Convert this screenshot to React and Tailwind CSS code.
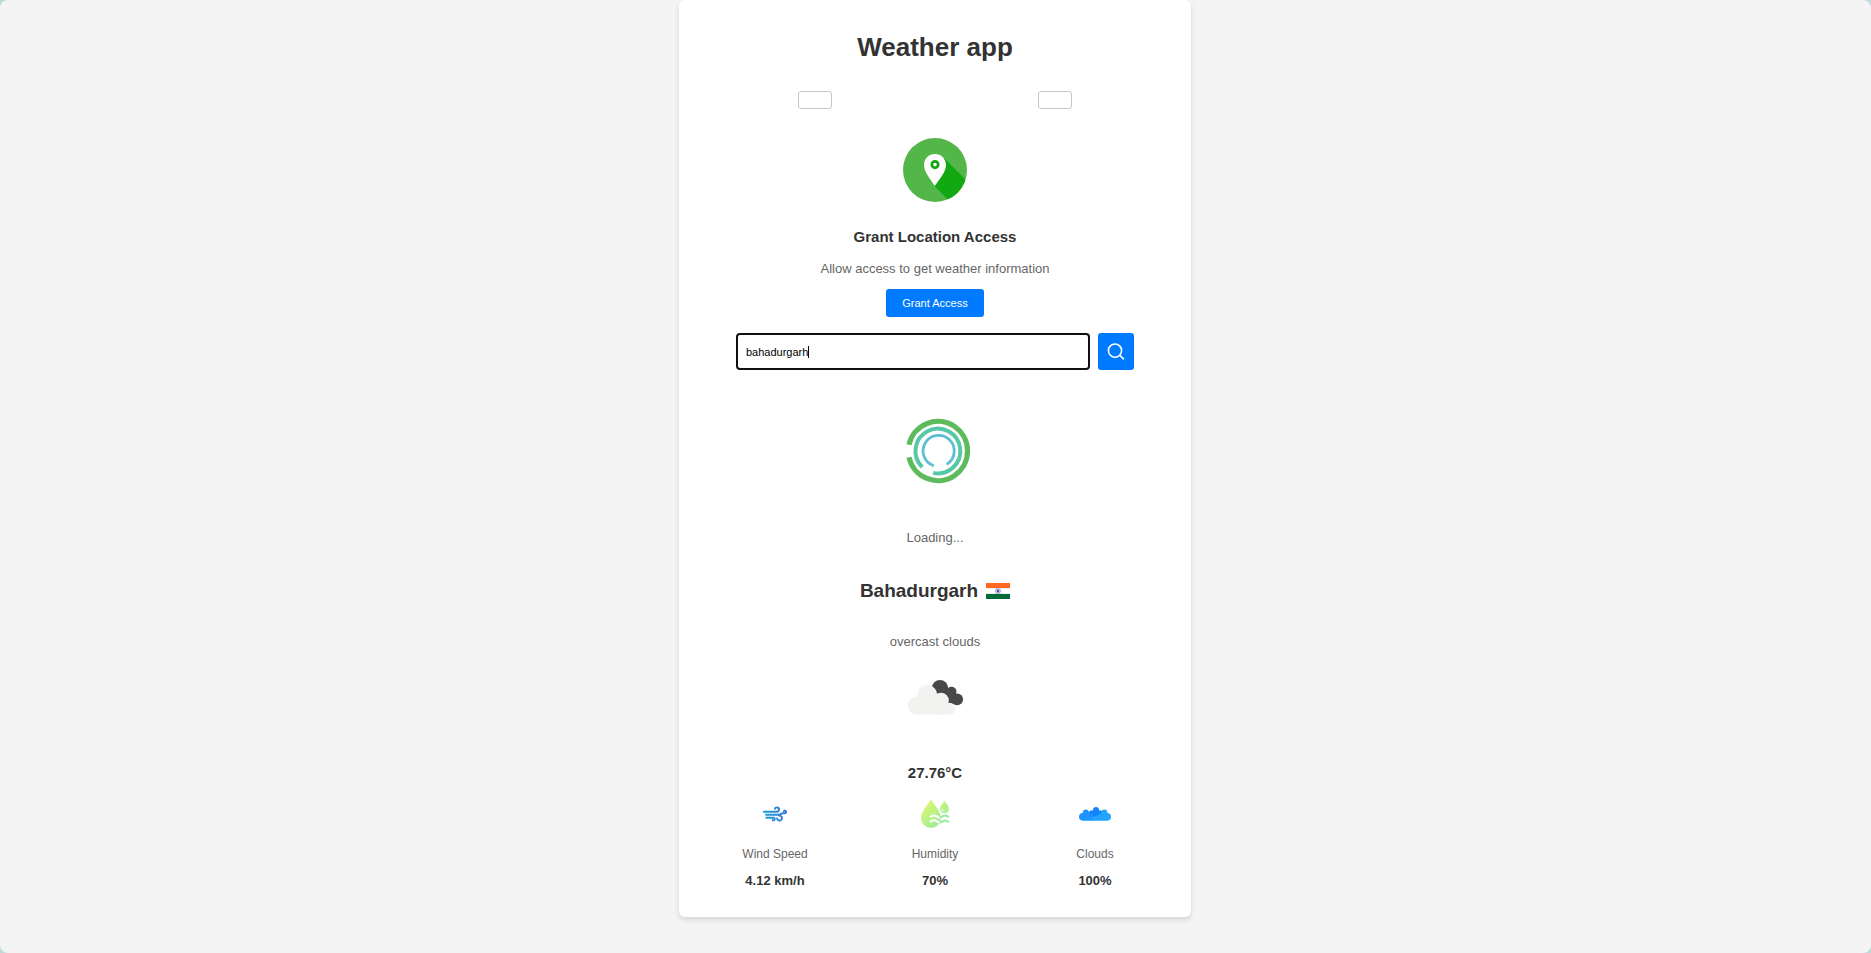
function PinIcon() {
  return (
    <svg viewBox="0 0 64 64" className="size-16" aria-hidden="true">
      <defs>
        <clipPath id="pin-disc">
          <circle cx="32" cy="32" r="32" />
        </clipPath>
      </defs>
      <circle cx="32" cy="32" r="32" fill="#52b748" />
      <path d="M41 20 L70 49 L60 77 L31.5 48 Z" fill="#12a812" clipPath="url(#pin-disc)" />
      <path d="M32 16 C25.7 16 21 20.8 21 27 C21 34 27.5 41 31.8 48 C36.5 41 43 34 43 27 C43 20.8 38.3 16 32 16 Z" fill="#fff" />
      <circle cx="32" cy="26.6" r="3.2" fill="#fff" stroke="#12a812" strokeWidth="2.8" />
    </svg>
  );
}

function SearchIcon() {
  return (
    <svg viewBox="0 0 16 16" className="size-4 overflow-visible" fill="none" stroke="#fff" strokeWidth="1.6" strokeLinecap="round" aria-hidden="true">
      <circle cx="7" cy="6.6" r="6.6" />
      <path d="M11.8 11.4 L15.5 14.8" />
    </svg>
  );
}

function Spinner() {
  return (
    <svg viewBox="0 0 80 80" className="size-20" fill="none" aria-hidden="true">
      <path d="M14 33.8 A29.6 29.6 0 1 1 14 46.2" stroke="#5dbb5d" strokeWidth="5.2" />
      <path d="M27.2 56 A22.4 22.4 0 1 1 38.2 61.9" stroke="#56c8a8" strokeWidth="4" />
      <path d="M38.8 54.8 A15.6 15.6 0 1 1 51.6 53.4" stroke="#5bc0d4" strokeWidth="2.8" />
    </svg>
  );
}

function IndiaFlag() {
  return (
    <svg viewBox="0 0 24 16" className="h-4 w-6" role="img" aria-label="India">
      <rect width="24" height="16" fill="#fff" />
      <rect width="24" height="5" fill="#ff6820" />
      <rect y="5" width="24" height="1" fill="#f3eeee" />
      <rect y="10" width="24" height="1" fill="#e3eee8" />
      <rect y="11" width="24" height="5" fill="#046a38" />
      <circle cx="12" cy="8" r="2.4" fill="#dcdaf2" stroke="#8580c6" strokeWidth="0.8" />
      <circle cx="12" cy="8" r="1.2" fill="#4a44a8" />
    </svg>
  );
}

function OvercastIcon() {
  return (
    <svg viewBox="0 0 80 80" className="size-20" aria-hidden="true">
      <g fill="#484849">
        <circle cx="45" cy="30" r="8" />
        <circle cx="56.5" cy="33.8" r="5" />
        <circle cx="62.2" cy="41.3" r="5.9" />
        <path d="M39 33 L48 25 L60 36 L62 47 L50 44 Z" />
      </g>
      <g fill="#f2f2f1">
        <circle cx="21.8" cy="47.6" r="8.9" />
        <circle cx="32.3" cy="37" r="10" />
        <circle cx="46" cy="42.5" r="7.8" />
        <circle cx="54.5" cy="50.6" r="5.9" />
        <rect x="21.5" y="38" width="26" height="18.5" />
        <rect x="42" y="46" width="12.5" height="10.5" />
      </g>
    </svg>
  );
}

function WindIcon() {
  return (
    <svg viewBox="0 0 32 32" className="size-8" fill="none" strokeWidth="1.9" strokeLinecap="round" aria-hidden="true">
      <defs>
        <linearGradient id="wind-tone" gradientUnits="userSpaceOnUse" x1="4" y1="0" x2="28" y2="0">
          <stop offset="0" stopColor="#1aa0dc" />
          <stop offset="1" stopColor="#3b74d6" />
        </linearGradient>
      </defs>
      <g stroke="url(#wind-tone)">
        <path d="M4.8 13.8 H17.6 A2.2 2.2 0 1 0 15.8 10.8" />
        <path d="M7 16.8 H18.5 C21.5 16.8 21.5 15.4 24 15.2 H25.5 A1.3 1.3 0 1 0 24.8 13.2" />
        <path d="M20 17.6 A2.5 2.5 0 1 1 18 20.4" />
        <path d="M7.3 19.8 H14.4 A1.3 1.3 0 1 1 13.6 22" />
      </g>
    </svg>
  );
}

function HumidityIcon() {
  return (
    <svg viewBox="0 0 32 32" className="size-8" aria-hidden="true">
      <defs>
        <linearGradient id="drop-tone" gradientUnits="userSpaceOnUse" x1="4" y1="4" x2="24" y2="28">
          <stop offset="0" stopColor="#e0f870" />
          <stop offset="1" stopColor="#98ea9c" />
        </linearGradient>
      </defs>
      <g fill="url(#drop-tone)">
        <path d="M12 1.8 C8.5 6.5 2 14 2 20 A10 10 0 0 0 22 20 C22 14 15.5 6.5 12 1.8 Z" />
        <path d="M25.5 3 C23.8 5.4 21 8 21 10.8 A4.5 4.5 0 0 0 30 10.8 C30 8 27.2 5.4 25.5 3 Z" />
      </g>
      <path d="M23 11 A2.4 2.4 0 0 0 25 13.2" fill="none" stroke="#fff" strokeWidth="1" strokeLinecap="round" />
      <g fill="none" stroke="#fff" strokeWidth="2">
        <path d="M11 19.2 C13.5 16.8 15.5 16.8 18 18.6 C20 20 21 20 22.5 19.4" />
        <path d="M11 24 C13.5 21.6 15.5 21.6 18 23.4 C20 24.8 21 24.8 22.5 24.2" />
      </g>
      <g fill="none" stroke="#98ea9c" strokeWidth="2">
        <path d="M20.5 19.6 C23 19.6 24 17.4 26.2 17.4 C28 17.4 28.6 18.4 30 19" />
        <path d="M20.5 24.4 C23 24.4 24 22.4 26.2 22.4 C28 22.4 28.6 23.4 30 24" />
      </g>
    </svg>
  );
}

function CloudsIcon() {
  return (
    <svg viewBox="0 0 32 32" className="size-8" aria-hidden="true">
      <g fill="#1f93ff">
        <circle cx="3.8" cy="18.8" r="3.8" />
        <circle cx="6.8" cy="14.6" r="3" />
        <circle cx="11.5" cy="15.4" r="2.4" />
        <rect x="3.4" y="15" width="16" height="7.8" />
      </g>
      <g fill="#1482fa">
        <circle cx="17" cy="12" r="3" />
        <circle cx="12.8" cy="14.4" r="2.2" />
        <circle cx="21" cy="14.4" r="2.2" />
        <path d="M12 13 H22 V19 H15 Z" />
      </g>
      <g fill="#22a5ff">
        <circle cx="25.4" cy="14.6" r="3" />
        <circle cx="28.2" cy="18.8" r="3.8" />
        <path d="M13 22.6 C13 19 16 17.4 19 17.4 C20 16 22 15.2 24 15.2 L28.5 16 V22.6 Z" />
      </g>
      <path d="M3 22.2 H29 V23 H3 Z" fill="#4db6ff" />
    </svg>
  );
}

const stats = [
  { label: "Wind Speed", value: "4.12 km/h", Icon: WindIcon },
  { label: "Humidity", value: "70%", Icon: HumidityIcon },
  { label: "Clouds", value: "100%", Icon: CloudsIcon },
];

const tabClass = "h-[18px] w-[34px] rounded-[3px] border border-[#c6c6c6] bg-white";

export default function App() {
  return (
    <div className="bg-[#bfd8dc]">
      <div className="min-h-screen rounded-lg bg-[#f4f4f4] pr-px font-['Liberation_Sans',Arial,sans-serif] text-[13px] leading-4 text-[#666]">
        <main className="mx-auto flex max-w-lg flex-col items-center rounded-md bg-white px-4 pt-8 pb-7 shadow-[0_3px_5px_rgba(0,0,0,0.12)]">
          <h1 className="text-[26px] leading-[30px] font-bold text-[#333]">Weather app</h1>

          <div className="mt-[29px] flex w-full justify-around">
            <button type="button" aria-label="Your weather" className={tabClass} />
            <button type="button" aria-label="Search weather" className={tabClass} />
          </div>

          <section className="mt-[29px] flex flex-col items-center">
            <PinIcon />
            <h2 className="mt-[25px] text-[15px] leading-5 font-bold text-[#333]">Grant Location Access</h2>
            <p className="mt-[14px]">Allow access to get weather information</p>
            <button type="button" className="mt-3 h-7 rounded-[3px] bg-[#007bff] px-4 text-[11px] text-white">
              Grant Access
            </button>
          </section>

          <form className="mt-4 flex h-[37px] w-full justify-center gap-2" onSubmit={(e) => e.preventDefault()}>
            <div className="relative w-full max-w-[354px]">
              <input
                type="text"
                aria-label="City"
                defaultValue="bahadurgarh"
                className="size-full rounded-sm border-2 border-[#101010] bg-white px-2 text-[11px] text-black outline-none"
              />
              <span className="absolute top-[13px] left-[72px] h-3 w-px bg-black" aria-hidden="true" />
            </div>
            <button type="submit" aria-label="Search" className="flex w-9 shrink-0 items-center justify-center rounded-[3px] bg-[#007bff]">
              <SearchIcon />
            </button>
          </form>

          <section className="mt-[41px] flex flex-col items-center" role="status">
            <Spinner />
            <p className="mt-[39px]">Loading...</p>
          </section>

          <section className="mt-[33px] flex w-full flex-col items-center">
            <div className="flex items-center gap-2">
              <h2 className="text-[19px] leading-6 font-bold text-[#333]">Bahadurgarh</h2>
              <IndiaFlag />
            </div>
            <p className="mt-[31px]">overcast clouds</p>
            <div className="mt-2">
              <OvercastIcon />
            </div>
            <p className="mt-[25px] text-[15px] leading-5 font-bold text-[#333]">27.76°C</p>
            <div className="mt-[15px] grid w-full grid-cols-3">
              {stats.map(({ label, value, Icon }) => (
                <div key={label} className="flex flex-col items-center">
                  <Icon />
                  <p className="mt-4 text-xs leading-4">{label}</p>
                  <p className="mt-[11px] font-bold text-[#333]">{value}</p>
                </div>
              ))}
            </div>
          </section>
        </main>
      </div>
    </div>
  );
}
